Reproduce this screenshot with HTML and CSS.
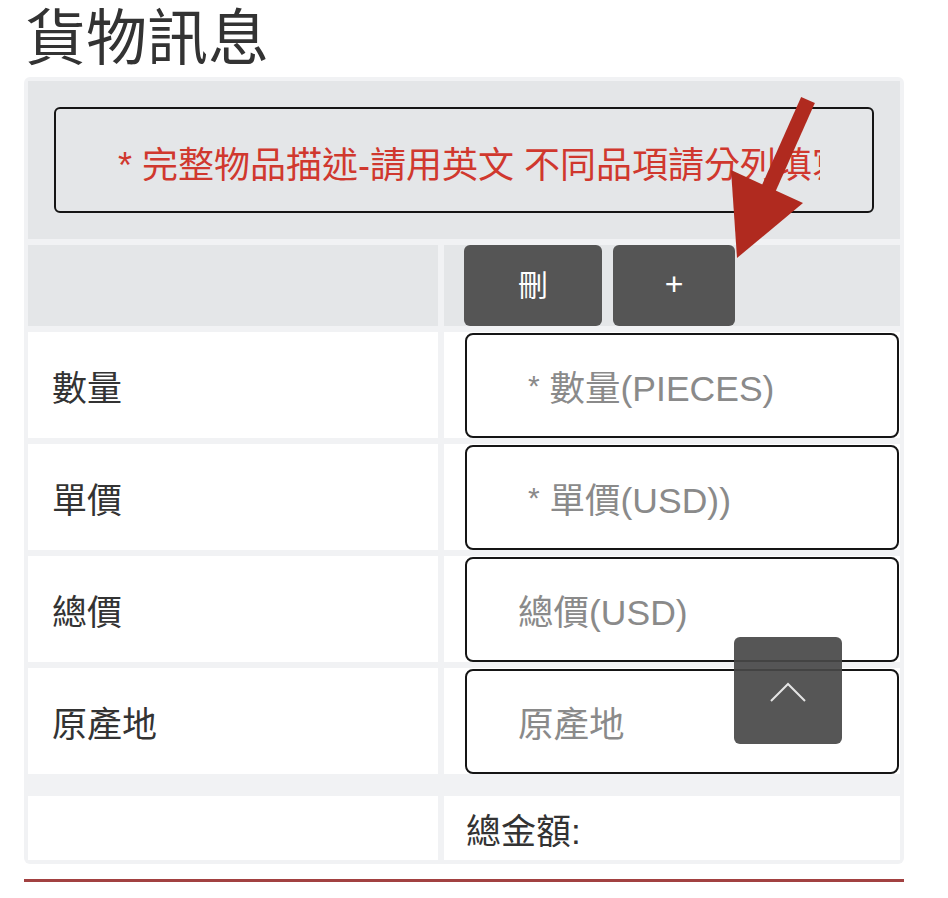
FILE: index.html
```html
<!DOCTYPE html>
<html lang="zh-Hant">
<head>
  <meta charset="UTF-8">
  <meta name="viewport" content="width=device-width, initial-scale=1.0">
  <title>貨物訊息</title>
  <link rel="stylesheet" href="styles.css">
</head>
<body>
  <div class="page">
    <h1 class="title">貨物訊息</h1>

    <div class="cargo">
      <div class="cell cell-gray notice-cell">
        <div class="notice">
          <span class="notice-text">* 完整物品描述-請用英文 不同品項請分列填寫</span>
        </div>
      </div>

      <div class="cell cell-gray"></div>
      <div class="cell cell-gray btn-cell">
        <button class="btn" type="button">刪</button>
        <button class="btn btn-add" type="button">+</button>
      </div>

      <div class="cell label">數量</div>
      <div class="cell field-cell"><div class="field"><span class="star">*</span> 數量(PIECES)</div></div>

      <div class="cell label">單價</div>
      <div class="cell field-cell"><div class="field"><span class="star">*</span> 單價(USD))</div></div>

      <div class="cell label">總價</div>
      <div class="cell field-cell"><div class="field">總價(USD)</div></div>

      <div class="cell label">原產地</div>
      <div class="cell field-cell"><div class="field">原產地</div></div>

      <div class="spacer"></div>

      <div class="cell total-cell"></div>
      <div class="cell total-cell total-text">總金額:</div>
    </div>

    <div class="rule"></div>
  </div>

  <button class="to-top" type="button" aria-label="top">
    <svg width="36" height="20" viewBox="0 0 36 20">
      <polyline points="1,19 18,2 35,19" fill="none" stroke="#e4e4e4" stroke-width="2"/>
    </svg>
  </button>

  <svg class="arrow" width="948" height="898" viewBox="0 0 948 898">
    <line x1="808" y1="100" x2="768" y2="190" stroke="#b02a1f" stroke-width="15"/>
    <polygon points="731,170 803,203 737,258" fill="#b02a1f"/>
  </svg>
</body>
</html>
```

FILE: styles.css
```css
body {
  margin: 0;
  font-family: "Liberation Sans", "Noto Sans CJK TC", sans-serif;
  color: #333;
  background: #fff;
}

.page {
  width: 880px;
  padding: 0 24px;
}

.title {
  margin: 0 0 3px;
  padding: 4px 0 0 1px;
  font-size: 61px;
  line-height: 70px;
  font-weight: normal;
  color: #333;
}

.cargo {
  display: grid;
  grid-template-columns: 410px 456px;
  grid-template-rows: 158px 81px repeat(4, 106px) 10px 64px;
  gap: 6px;
  padding: 4px;
  background: #f1f2f4;
  border-radius: 6px;
}

.cell {
  background: #fff;
  display: flex;
  align-items: center;
}

.cell-gray {
  background: #e4e6e8;
}

.notice-cell {
  grid-column: 1 / 3;
  padding: 0 26px;
}

.notice {
  width: 100%;
  height: 106px;
  box-sizing: border-box;
  border: 2px solid #151515;
  border-radius: 6px;
  padding: 0 52px 0 62px;
  display: flex;
  align-items: center;
  overflow: hidden;
}

.notice-text {
  white-space: nowrap;
  overflow: hidden;
  color: #d0382e;
  font-size: 36px;
  padding-top: 4px;
}

.btn-cell {
  align-items: stretch;
  gap: 11px;
  padding-left: 20px;
}

.btn {
  width: 138px;
  border: none;
  border-radius: 6px;
  background: #555;
  color: #fff;
  font-family: inherit;
  font-size: 30px;
  padding: 0 0 6px;
}

.btn-add {
  width: 122px;
  font-size: 32px;
  padding: 0 0 2px;
}

.label {
  padding-left: 24px;
  font-size: 35px;
}

.field-cell {
  align-items: stretch;
  padding: 1px 1px 0 21px;
}

.field {
  flex: 1;
  border: 2px solid #151515;
  border-radius: 8px;
  padding-left: 51px;
  display: flex;
  align-items: center;
  font-size: 35.5px;
  color: #8a8a8a;
  white-space: pre;
}

.star {
  margin-left: 10px;
  font-size: 30px;
}

.spacer {
  grid-column: 1 / 3;
}

.total-text {
  padding-left: 22px;
  font-size: 35px;
}

.rule {
  margin-top: 15px;
  height: 3px;
  background: #a24141;
}

.to-top {
  position: absolute;
  left: 734px;
  top: 637px;
  width: 108px;
  height: 107px;
  border: none;
  border-radius: 6px;
  background: rgba(72, 72, 72, 0.92);
  display: flex;
  justify-content: center;
  align-items: flex-start;
  padding-top: 45px;
}

.arrow {
  position: absolute;
  left: 0;
  top: 0;
  pointer-events: none;
}
```
